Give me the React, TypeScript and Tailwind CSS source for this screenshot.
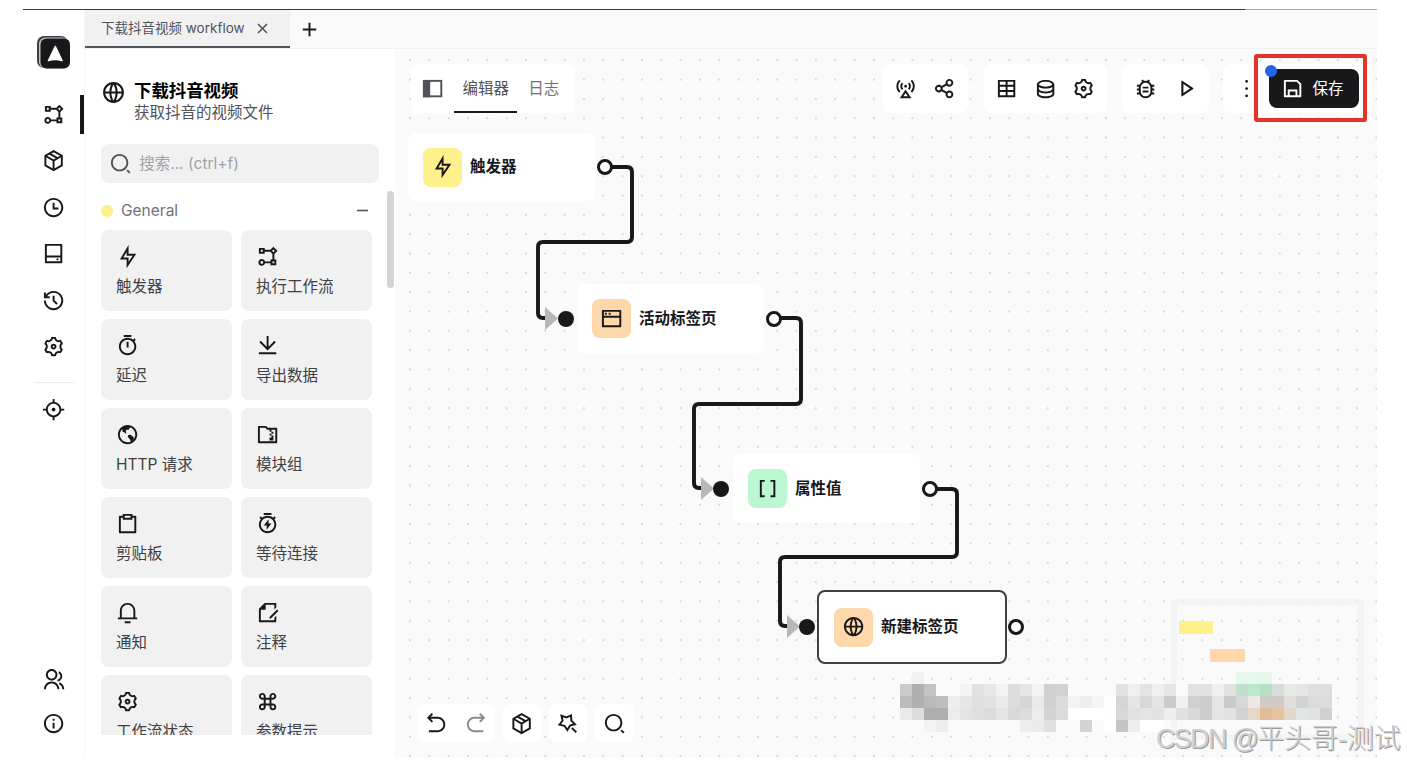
import type { IconType } from "react-icons";
import {
  RiAddLine,
  RiArrowGoBackLine,
  RiArrowGoForwardLine,
  RiBaseStationLine,
  RiBracketsLine,
  RiBug2Line,
  RiClipboardLine,
  RiCloseLine,
  RiCommandLine,
  RiDatabase2Line,
  RiDownloadLine,
  RiEarthLine,
  RiFileEditLine,
  RiFlashlightLine,
  RiFlowChart,
  RiFocus3Line,
  RiFolderZipLine,
  RiGlobalLine,
  RiGroupLine,
  RiHardDrive2Line,
  RiHistoryLine,
  RiInformationLine,
  RiMore2Line,
  RiNotification3Line,
  RiPlayLine,
  RiSaveLine,
  RiSearch2Line,
  RiSettings3Line,
  RiShareLine,
  RiSubtractLine,
  RiTimeLine,
  RiTimerFlashLine,
  RiTimerLine,
  RiWindowLine,
} from "react-icons/ri";

const BoxIcon: IconType = ({ size = 24 }) => (
  <svg width={size} height={size} viewBox="0 0 24 24" fill="none" stroke="currentColor" strokeWidth="2">
    <path d="M12 2.2 L20.5 7 V17 L12 21.8 L3.5 17 V7 Z" />
    <path d="M3.5 7 L12 12 L20.5 7 M12 12 V21.8 M7.7 4.7 L16.2 9.5" />
  </svg>
);

const PanelIcon: IconType = ({ size = 24 }) => (
  <svg width={size} height={size} viewBox="0 0 24 24" fill="none" stroke="currentColor" strokeWidth="2">
    <rect x="3" y="4" width="18" height="16" />
    <path d="M3 4 H8.500 V20 H3 Z" fill="currentColor" />
  </svg>
);

const TableIcon: IconType = ({ size = 24 }) => (
  <svg width={size} height={size} viewBox="0 0 24 24" fill="none" stroke="currentColor" strokeWidth="2">
    <path d="M4 4 H20 V20 H4 Z M4 9 H20 M4 14.500 H20 M12 4 V20" />
  </svg>
);

const MagicStar: IconType = ({ size = 24 }) => (
  <svg width={size} height={size} viewBox="0 0 24 24" fill="none" stroke="currentColor" strokeWidth="2">
    <path d="M5.6 3.8 L10.8 5.6 L15.6 3.6 L15.9 8.9 L19.6 12.7 L14.5 14.1 L11.7 18.7 L8.7 14.3 L3.6 13.1 L6.8 8.9 Z" />
    <path d="M16.4 16.4 L21 21" />
  </svg>
);

const Logo = () => (
  <svg width="33" height="33" viewBox="0 0 33 33">
    <rect width="31" height="32" rx="7" fill="#3f3f46" />
    <rect x="2" y="1.5" width="30" height="31" rx="6.5" fill="#c4c4c8" />
    <rect x="3.5" y="2.5" width="29.5" height="30" rx="6" fill="#18181b" />
    <path
      d="M18.3 10.5 L25 24.5 Q18.300 22.500 11.5 24.5 Z"
      fill="#fff"
      stroke="#fff"
      strokeWidth="1.6"
      strokeLinejoin="round"
    />
  </svg>
);

const navItems: IconType[] = [
  RiFlowChart,
  BoxIcon,
  RiTimeLine,
  RiHardDrive2Line,
  RiHistoryLine,
  RiSettings3Line,
];

const blocks: { icon: IconType; label: string }[] = [
  { icon: RiFlashlightLine, label: "触发器" },
  { icon: RiFlowChart, label: "执行工作流" },
  { icon: RiTimerLine, label: "延迟" },
  { icon: RiDownloadLine, label: "导出数据" },
  { icon: RiEarthLine, label: "HTTP 请求" },
  { icon: RiFolderZipLine, label: "模块组" },
  { icon: RiClipboardLine, label: "剪贴板" },
  { icon: RiTimerFlashLine, label: "等待连接" },
  { icon: RiNotification3Line, label: "通知" },
  { icon: RiFileEditLine, label: "注释" },
  { icon: RiSettings3Line, label: "工作流状态" },
  { icon: RiCommandLine, label: "参数提示" },
];

// one string per row, "-" leaves the cell transparent
const mosaic = [
  "- f2f2f2 - - - - - - - - - - - - - - - - - - - - - - - - - - e8f7ee e6f7ed e6f6ec - - - - -",
  "cbcbcb b0b0b0 c2c2c2 fbfbfb - f4f4f4 e2e2e2 e7e7e7 f3f3f3 dddddd e6e6e6 f4f4f4 d0d0d0 d2d2d2 - - - - e2e2e2 efefef e3e3e3 efefef e6e6e6 fafafa e1e1e1 e1e1e1 efefef e2e2e2 bfdfcb b9e8cb b5e0c4 d6dcd8 e8e8e8 e6e6e6 e0e0e0 dedede",
  "bbbbbb b0b0b0 b9b9b9 bebebe eeeeee e6e6e6 e0e0e0 e2e2e2 eaeaea dcdcdc d6d6d6 eaeaea d0d0d0 dadada f3f3f3 ededed f5f5f5 fdfdfd d5d5d5 e6e6e6 d7d7d7 e4e4e4 cbcbcb f0f0f0 d0d0d0 cdcdcd e5e5e5 cacaca d7d7d7 ece8e5 d2cac5 d2cac5 e0dfde d3d3d3 dcdcdc dcdcdc",
  "eaeaea dddddd aeaeae aeaeae ececec e3e3e3 dfdfdf dcdcdc e4e4e4 d8d8d8 dddddd ececec d3d3d3 dbdbdb ffffff ffffff ffffff fefefe d7d7d7 e2e2e2 e4e4e4 e2e2e2 eeeeee e0e0e0 d8d8d8 cdcdcd e4e4e4 e2e2e2 d2d2d2 e6d8c8 e0bd97 e4c4a0 e3d6ca e1e5e5 e2e2e2 d0d0d0",
  "- - f3f3f3 ededed - - - - - - eeeeee ebebeb e0e0e0 - - d3d3d3 fafafa ffffff c5c5c5 ededed ffffff ffffff - - - - - - - - - - - - - -",
];

const Sidebar = () => (
  <aside className="relative flex w-[62px] shrink-0 flex-col items-center border-r border-[#f6f6f6] bg-white pt-[26px] pb-[23px]">
    <Logo />
    <nav className="mt-[34px] ml-[1px] flex flex-col gap-[23.3px]">
      {navItems.map((Icon, i) => (
        <Icon key={i} size={23.2} />
      ))}
    </nav>
    <div className="absolute top-[85px] right-0 h-[39px] w-[4px] bg-[#18181b]" />
    <hr className="mt-[23px] w-[40px] border-[#ececec]" />
    <RiFocus3Line size={23.2} className="mt-[15px] ml-[1px]" />
    <div className="mt-auto ml-[1px] flex flex-col gap-[21px]">
      <RiGroupLine size={23.2} />
      <RiInformationLine size={23.2} />
    </div>
  </aside>
);

const TabBar = () => (
  <header className="flex h-[39px] shrink-0 items-center border-b border-[#f1f1f1] bg-[#fafafa]">
    <div className="flex h-full w-[205px] items-center border-b-2 border-[#52525b] bg-[#f1f1f1] pl-4 text-[13.5px] text-[#52525b]">
      <span className="w-[150px] whitespace-nowrap">下载抖音视频 workflow</span>
      <RiCloseLine size={19} className="ml-[2px]" />
    </div>
    <RiAddLine size={23} className="ml-[8px]" />
  </header>
);

const BlockPanel = () => (
  <section className="relative flex w-[310px] shrink-0 flex-col overflow-hidden bg-white pl-4">
    <div className="flex h-[95px] pt-[31px]">
      <RiGlobalLine size={25} />
      <div className="ml-[8px]">
        <p className="text-[17.4px] leading-[22px] font-bold text-black">下载抖音视频</p>
        <p className="text-[15.5px] leading-[22px] text-[#52525b]">获取抖音的视频文件</p>
      </div>
    </div>
    <div className="flex h-[39px] w-[278px] items-center rounded-lg bg-[#f1f1f1] pl-[8px]">
      <RiSearch2Line size={23.2} className="text-[#52525b]" />
      <span className="ml-[7px] pt-px text-[15.5px] text-[#a1a1aa]">搜索... (ctrl+f)</span>
    </div>
    <div className="flex h-[47px] w-[271px] items-center pt-[8px] text-[15.5px] text-[#71717a]">
      <span className="h-[12px] w-[12px] rounded-full bg-[#fef08a]" />
      <span className="ml-[8px]">General</span>
      <RiSubtractLine size={19} className="ml-auto text-[#52525b]" />
    </div>
    <div className="grid h-[505px] w-[271px] grid-cols-2 content-start gap-x-[9px] gap-y-[8px] overflow-hidden">
      {blocks.map(({ icon: Icon, label }) => (
        <div key={label} className="h-[81px] rounded-lg bg-[#f1f1f1] pt-[15px] pl-[15px]">
          <Icon size={23.2} />
          <p className="mt-[7px] text-[15.5px] leading-[23px] whitespace-nowrap text-[#3f3f46]">{label}</p>
        </div>
      ))}
    </div>
    <div className="absolute top-[142px] right-[1px] h-[97px] w-[7px] rounded-full bg-[#d4d4d8]" />
  </section>
);

const Handle = ({ className, filled }: { className: string; filled?: boolean }) => (
  <span
    className={`absolute h-4 w-4 rounded-full ${
      filled ? "bg-[#18181b]" : "border-[3px] border-[#18181b] bg-white"
    } ${className}`}
  />
);

const FlowNode = ({
  icon: Icon,
  label,
  className,
  color,
}: {
  icon: IconType;
  label: string;
  className: string;
  color: string;
}) => (
  <div className={`absolute flex items-center rounded-lg bg-white ${className}`}>
    <span className={`flex h-[39px] w-[39px] items-center justify-center rounded-lg ${color}`}>
      <Icon size={23.2} />
    </span>
    <span className="ml-[8px] text-[15.5px] font-semibold text-[#18181b]">{label}</span>
  </div>
);

const Edges = () => (
  <svg className="absolute inset-0" width="982" height="709" fill="none">
    <g stroke="#18181b" strokeWidth="3.9">
      <path d="M210 118 H232 Q237 118 237 123 V188 Q237 193 232 193 H148 Q143 193 143 198 V264 Q143 269 148 269 H152" />
      <path d="M380 269 H401 Q406 269 406 274 V350 Q406 355 401 355 H304 Q299 355 299 360 V434 Q299 439 304 439 H308" />
      <path d="M536 440 H557 Q562 440 562 445 V503 Q562 508 557 508 H390 Q385 508 385 513 V572 Q385 577 390 577 H394" />
    </g>
    <g fill="#b7b7b9">
      <path d="M150 258 L163 269.500 L150 281 Z" />
      <path d="M306 428 L319 439.500 L306 451 Z" />
      <path d="M392 566 L405 577.500 L392 589 Z" />
    </g>
  </svg>
);

const Mosaic = () => (
  <div className="absolute top-[623px] left-[505px] grid w-[432px] grid-cols-36">
    {mosaic.flatMap((row, y) =>
      row.split(" ").map((cell, x) => (
        <span
          key={`${y}-${x}`}
          className="h-[12px] w-[12px]"
          style={{ backgroundColor: cell === "-" ? "transparent" : `#${cell}` }}
        />
      ))
    )}
  </div>
);

const MiniMap = () => (
  <div className="absolute top-[550px] left-[776px] h-[141px] w-[193px] border-[6px] border-[#f3f3f3]/80">
    <span className="absolute top-[16px] left-[2px] h-[13px] w-[34px] bg-[#fef08a]" />
    <span className="absolute top-[44px] left-[33px] h-[13px] w-[35px] bg-[#fed7aa]" />
  </div>
);

const Toolbar = () => (
  <div className="absolute top-[15px] left-[16px] flex h-[49px] items-center">
    <div className="flex h-full w-[164px] items-center rounded-lg bg-white pl-[10px] text-[15.5px] text-[#52525b]">
      <PanelIcon size={23.2} />
      <span className="ml-[10px] flex h-full w-[63px] items-center justify-center border-b-2 border-[#18181b] pt-[2px]">
        编辑器
      </span>
      <span className="ml-[11px] text-[#71717a]">日志</span>
    </div>
    <div className="ml-[308px] flex h-full w-[85px] items-center gap-[15.7px] rounded-lg bg-white pl-[11px]">
      <RiBaseStationLine size={23.2} />
      <RiShareLine size={23.2} />
    </div>
    <div className="ml-[16px] flex h-full w-[123px] items-center gap-[15.5px] rounded-lg bg-white pl-[11px]">
      <TableIcon size={23.2} />
      <RiDatabase2Line size={23.2} />
      <RiSettings3Line size={23.2} />
    </div>
    <div className="ml-[15px] flex h-full w-[87px] items-center gap-[15.7px] rounded-lg bg-white pl-[12px]">
      <RiBug2Line size={23.2} />
      <RiPlayLine size={25} />
    </div>
    <div className="ml-[14px] flex h-full w-[147px] items-center rounded-lg bg-white pl-[11.5px]">
      <RiMore2Line size={23.2} />
      <button className="relative ml-[11.5px] flex h-[39px] w-[90px] items-center rounded-lg bg-[#18181b] pl-[12px] text-[15.5px] text-white">
        <span className="absolute -top-[4px] -left-[4px] h-[12px] w-[12px] rounded-full bg-[#2563eb]" />
        <RiSaveLine size={23.2} />
        <span className="ml-[8px]">保存</span>
      </button>
    </div>
  </div>
);

const BottomBar = () => (
  <div className="absolute top-[655px] left-[22px] flex h-[39px] items-center gap-[8px] text-[#18181b]">
    <div className="flex h-full w-[78px] items-center justify-center gap-[16px] rounded-lg bg-white">
      <RiArrowGoBackLine size={23.2} />
      <RiArrowGoForwardLine size={23.2} className="text-[#8b8b8f]" />
    </div>
    <div className="flex h-full w-[38px] items-center justify-center rounded-lg bg-white">
      <BoxIcon size={23.2} />
    </div>
    <div className="flex h-full w-[38px] items-center justify-center rounded-lg bg-white">
      <MagicStar size={23.2} />
    </div>
    <div className="flex h-full w-[39px] items-center justify-center rounded-lg bg-white">
      <RiSearch2Line size={23.2} />
    </div>
  </div>
);

const Canvas = () => (
  <main className="relative h-full flex-1 overflow-hidden bg-[#fafafa] bg-[radial-gradient(#d9d9dc_0.8px,transparent_1.1px)] bg-[length:19.33px_19.33px] bg-[position:5.3px_1.600px]">
    <MiniMap />
    <Mosaic />
    <FlowNode icon={RiFlashlightLine} label="触发器" color="bg-[#fef08a]" className="top-[84px] left-[13px] h-[68px] w-[187px] pl-[15px]" />
    <FlowNode icon={RiWindowLine} label="活动标签页" color="bg-[#fed7aa]" className="top-[235px] left-[182px] h-[69px] w-[187px] pl-[15px]" />
    <FlowNode icon={RiBracketsLine} label="属性值" color="bg-[#bbf7d0]" className="top-[405px] left-[338px] h-[69px] w-[187px] pl-[15px]" />
    <FlowNode icon={RiGlobalLine} label="新建标签页" color="bg-[#fed7aa]" className="top-[541px] left-[422px] h-[74px] w-[190px] border-2 border-[#3f3f46] pl-[15px]" />
    <Edges />
    <Handle className="top-[110px] left-[202px]" />
    <Handle className="top-[262px] left-[163px]" filled />
    <Handle className="top-[262px] left-[371px]" />
    <Handle className="top-[432px] left-[318px]" filled />
    <Handle className="top-[432px] left-[527px]" />
    <Handle className="top-[570px] left-[404px]" filled />
    <Handle className="top-[570px] left-[613px]" />
    <Toolbar />
    <BottomBar />
  </main>
);

const App = () => {
  return (
    <div className="relative h-[765px] w-[1407px] overflow-hidden bg-white pt-[9px] pl-[23px] font-['Inter','Noto_Sans_CJK_SC',sans-serif] text-[#18181b]">
      <div className="flex h-px w-[1354px]">
        <span className="w-[1222px] bg-[#3a3a3a]" />
        <span className="flex-1 bg-[#a8a8a8]" />
      </div>
      <div className="flex h-[748px] w-[1354px]">
        <Sidebar />
        <div className="flex flex-1 flex-col">
          <TabBar />
          <div className="flex min-h-0 flex-1">
            <BlockPanel />
            <Canvas />
          </div>
        </div>
      </div>
      <div className="absolute top-[54px] left-[1254px] h-[68px] w-[113px] rounded-[3px] border-4 border-[#e8302a]" />
      <p className="absolute top-[720px] left-[1156px] font-['Liberation_Sans','Noto_Sans_CJK_SC',sans-serif] text-[27px] leading-[38px] font-light whitespace-nowrap text-[#cfcfd1] [text-shadow:1px_1px_0_#9a9a9a]">
        <span className="tracking-[-1.7px]">CSDN @</span>
        <span className="tracking-[-0.100px]">平头哥-测试</span>
      </p>
    </div>
  );
};

export default App;
